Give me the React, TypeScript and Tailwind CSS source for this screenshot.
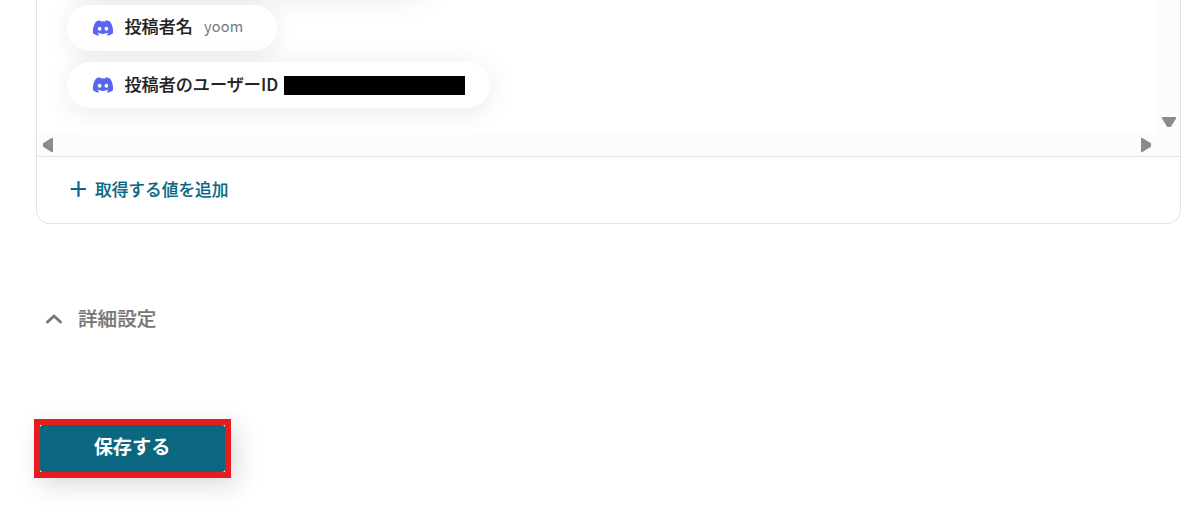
import React from 'react';
import { FaDiscord } from 'react-icons/fa';

const outputs = [
  { id: 1, label: '投稿者名', value: 'yoom', masked: false, width: 'w-[210px]', offset: 'pb-1' },
  { id: 2, label: '投稿者のユーザーID', value: '', masked: true, width: 'w-[423px]', offset: 'pb-0.5' },
];

const OutputChip = ({ item }: { item: (typeof outputs)[number] }) => (
  <div
    className={`flex h-[46px] shrink-0 items-center rounded-full bg-white pl-[25px] shadow-[0_4px_28px_rgba(0,0,0,0.09)] ${item.width}`}
  >
    <FaDiscord className="h-[22px] w-[22px] shrink-0 text-[#5865f2]" />
    <div className={`flex items-center ${item.offset}`}>
      <span className="ml-[10.5px] whitespace-nowrap text-[17.1px] leading-6 font-medium text-[#222] [-webkit-text-stroke:0.15px_#222]">
        {item.label}
      </span>
      {item.masked ? (
        <span className="mt-[3px] ml-1.5 h-[19px] w-[181px] shrink-0 bg-black" />
      ) : (
        <span className="ml-[11px] text-[14.5px] leading-6 tracking-[0.3px] text-[#777]">{item.value}</span>
      )}
    </div>
  </div>
);

const Arrow = ({ className }: { className: string }) => (
  <svg viewBox="0 0 16 12" className={`h-3 w-4 shrink-0 ${className}`}>
    <path d="M1.8 2h12.4L9.2 10H6.8Z" fill="#8b8b8b" stroke="#8b8b8b" strokeWidth="2" strokeLinejoin="round" />
  </svg>
);

const OutputPanel = () => (
  <div className="ml-9 h-[224px] w-[1145px] overflow-hidden rounded-b-[14px] border border-t-0 border-[#e3e3e3]">
    <div className="flex h-[133px]">
      <div className="flex flex-1 flex-col items-start gap-[11px] overflow-hidden pl-[30px]">
        {/* Row scrolled out of view, only its shadow is visible */}
        <div className="-mt-[52px] h-[46px] w-[365px] shrink-0 rounded-full bg-white shadow-[0_4px_28px_rgba(0,0,0,0.09)]" />
        {outputs.map((item) => (
          <OutputChip key={item.id} item={item} />
        ))}
      </div>
      <div className="flex w-[23px] items-end justify-center bg-[#fcfcfc] pb-[5px]">
        <Arrow className="" />
      </div>
    </div>
    <div className="flex h-6 items-center justify-between border-b border-[#e3e3e3] bg-[#fcfcfc] pr-[26px] pl-[3px]">
      <Arrow className="rotate-90" />
      <Arrow className="-rotate-90" />
    </div>
    <button className="flex h-[66px] items-center pb-[2px] pl-[33px] text-[#0b6781]">
      <svg viewBox="0 0 16 16" className="h-4 w-4" fill="none" stroke="currentColor" strokeWidth="2.2">
        <path d="M8.5 1v14M1.5 8h14" strokeLinecap="round" />
      </svg>
      <span className="ml-[9px] text-[16.7px] leading-6 font-medium [-webkit-text-stroke:0.15px_#0b6781]">
        取得する値を追加
      </span>
    </button>
  </div>
);

const App: React.FC = () => {
  return (
    <main className="h-[519px] w-[1192px] overflow-hidden bg-white font-['Noto_Sans_CJK_JP',sans-serif]">
      <OutputPanel />

      <button className="mt-[81px] ml-[45px] flex h-7 items-center text-[#777]">
        <svg viewBox="0 0 18 12" className="h-3 w-[18px]" fill="none" stroke="currentColor" strokeWidth="2.9">
          <path d="M2.5 9 9 3l6.5 6" strokeLinecap="round" strokeLinejoin="round" />
        </svg>
        <span className="mb-0.5 ml-[15px] text-[19.6px] leading-7 font-medium [-webkit-text-stroke:0.2px_#777]">
          詳細設定
        </span>
      </button>

      <div className="mt-[86px] ml-[34px] h-[59px] w-[197px] border-6 border-[#e81c1c] shadow-[6px_8px_24px_rgba(20,45,60,0.16)]">
        <button className="h-full w-full rounded-[3px] bg-[#0b6780] pr-px pb-[5px] text-[19.2px] font-bold text-white">
          保存する
        </button>
      </div>
    </main>
  );
};

export default App;
